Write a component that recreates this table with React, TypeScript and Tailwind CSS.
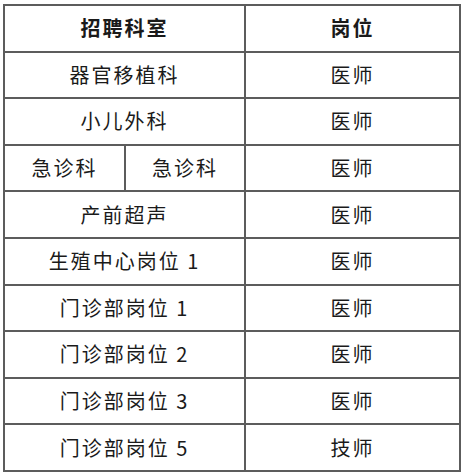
import React from "react";

const rows: { a: string; b?: string; c: string }[] = [
  { a: "器官移植科", c: "医师" },
  { a: "小儿外科", c: "医师" },
  { a: "急诊科", b: "急诊科", c: "医师" },
  { a: "产前超声", c: "医师" },
  { a: "生殖中心岗位 1", c: "医师" },
  { a: "门诊部岗位 1", c: "医师" },
  { a: "门诊部岗位 2", c: "医师" },
  { a: "门诊部岗位 3", c: "医师" },
  { a: "门诊部岗位 5", c: "技师" },
];

export default function App() {
  const cell = "border-2 border-[#5c5c5c] text-center align-middle p-0";
  return (
    <div className="w-[466px] h-[473px] bg-white pt-[4px] pl-[3px]" style={{ fontFamily: '"Noto Sans CJK SC", "Noto Sans", sans-serif' }}>
      <table className="border-collapse table-fixed w-[458px] h-[466px] text-[20px] text-[#1a1a1a] tracking-[2px]">
        <colgroup>
          <col className="w-[121px]" />
          <col className="w-[120px]" />
          <col className="w-[215px]" />
        </colgroup>
        <tbody>
          <tr className="h-[46.6px]">
            <td colSpan={2} className={`${cell} font-bold`}>招聘科室</td>
            <td className={`${cell} font-bold`}>岗位</td>
          </tr>
          {rows.map((r, i) => (
            <tr key={i} className="h-[46.6px]">
              {r.b ? (
                <>
                  <td className={cell}>{r.a}</td>
                  <td className={cell}>{r.b}</td>
                </>
              ) : (
                <td colSpan={2} className={cell}>{r.a}</td>
              )}
              <td className={cell}>{r.c}</td>
            </tr>
          ))}
        </tbody>
      </table>
    </div>
  );
}
